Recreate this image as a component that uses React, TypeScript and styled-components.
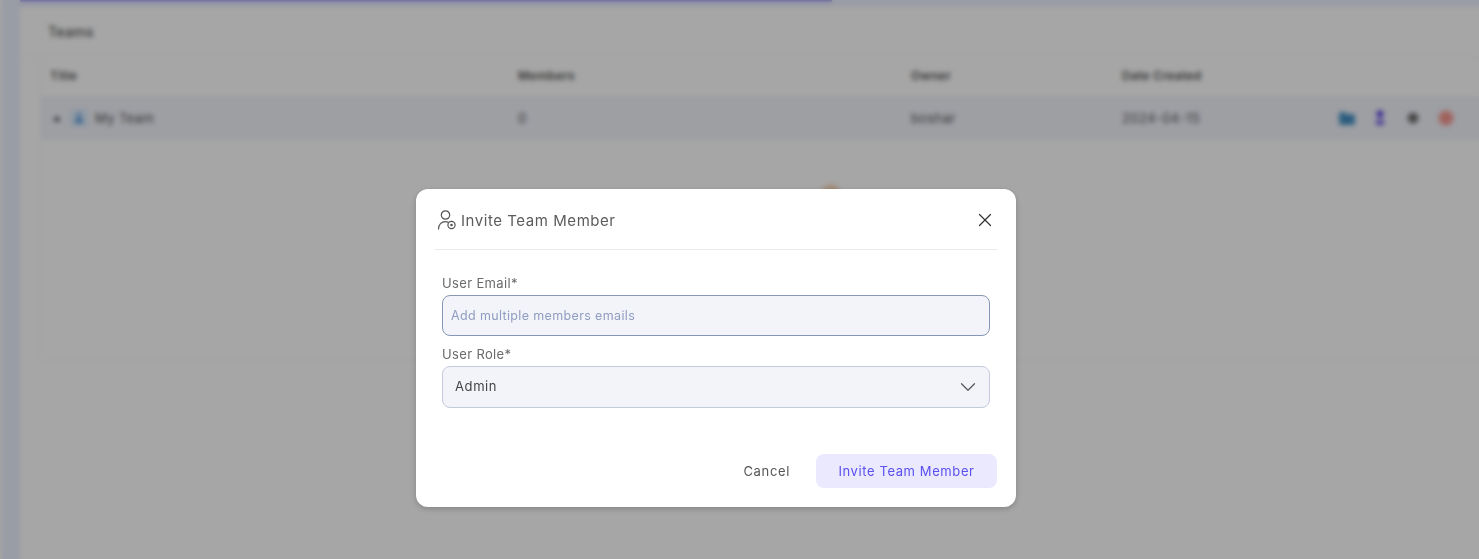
import React from "react";
import styled, { createGlobalStyle } from "styled-components";
import { X, ChevronDown } from "lucide-react";

const GlobalStyle = createGlobalStyle`
  html, body { margin: 0; padding: 0; height: 100%; overflow: hidden; }
  body { font-family: Inter, "Liberation Sans", sans-serif; background: #fff; }
  #root { height: 100%; }
  * { box-sizing: border-box; }
`;

const Page = styled.div`
  display: flex;
  height: 559px;
  background: #fff;
  overflow: hidden;
`;

const SideStrip = styled.div`
  width: 18px;
  flex-shrink: 0;
  margin-left: 2px;
  background: #ecf1ff;
`;

const Main = styled.div`
  flex: 1;
  min-width: 0;
  display: flex;
  flex-direction: column;
`;

const TopBar = styled.div`
  height: 7px;
  flex-shrink: 0;
  background: #ecf1ff;
`;

const Progress = styled.div`
  width: 812px;
  height: 2px;
  background: #a7a2f5;
`;

const Card = styled.div`
  flex: 1;
  padding: 0 0 0 20px;
`;

const CardTitle = styled.h2`
  margin: 0 0 0 -20px;
  padding: 0 0 0 28px;
  height: 52px;
  line-height: 50px;
  font-size: 14px;
  font-weight: 500;
  color: #555;
  letter-spacing: 0.3px;
  border-bottom: 1px solid #f2f2f2;
`;

const Table = styled.div`
  height: 302px;
  border: 1px solid #f3f3f3;
  border-top: none;
  border-right: none;
  position: relative;
`;

const columns = "468px 393px 211px 1fr 141px";

const HeadRow = styled.div`
  display: grid;
  grid-template-columns: ${columns};
  height: 37px;
  align-items: center;
  padding: 0 0 4px 9px;
  font-size: 12px;
  font-weight: 600;
  letter-spacing: 0.3px;
  color: #555;
`;

const Row = styled.div`
  display: grid;
  grid-template-columns: ${columns};
  height: 44px;
  align-items: center;
  padding-left: 9px;
  background: #f2f4fb;
  font-size: 13px;
  letter-spacing: 0.4px;
  color: #555;
`;

const TitleCell = styled.div`
  display: flex;
  align-items: center;
`;

const Caret = styled.span`
  width: 0;
  height: 0;
  margin: 0 9px 0 3px;
  border-left: 4px solid transparent;
  border-right: 4px solid transparent;
  border-bottom: 5px solid #444;
`;

const TeamBadge = styled.span`
  width: 18px;
  height: 18px;
  margin-right: 7px;
  border-radius: 4px;
  background: #dcebfb;
  display: flex;
  align-items: center;
  justify-content: center;
`;

const Actions = styled.div`
  display: flex;
  align-items: center;
  gap: 15px;
`;

const OrangeBlob = styled.div`
  position: absolute;
  left: 782px;
  top: 126px;
  width: 16px;
  height: 30px;
  border-radius: 6px;
  background: #f6d5b4;
`;

const Backdrop = styled.div`
  position: fixed;
  inset: 0;
  padding: 189px 0 0 416px;
  background: rgba(0, 0, 0, 0.35);
  backdrop-filter: blur(2.5px);
`;

const Modal = styled.div`
  width: 600px;
  height: 318px;
  padding: 0 19px;
  border-radius: 12px;
  background: #fff;
  box-shadow: 0 2px 6px rgba(0, 0, 0, 0.2);
  display: flex;
  flex-direction: column;
`;

const ModalHeader = styled.div`
  height: 61px;
  flex-shrink: 0;
  display: flex;
  align-items: center;
  padding: 2px 1px 0 2px;
  border-bottom: 1px solid #ebebeb;
`;

const ModalTitle = styled.div`
  flex: 1;
  margin-left: 4px;
  font-size: 15px;
  font-weight: 400;
  color: #5c5c5c;
  letter-spacing: 0.55px;
`;

const CloseButton = styled.button`
  border: none;
  background: none;
  padding: 0;
  display: flex;
  color: #333;
`;

const Form = styled.div`
  padding: 25px 7px 0;
  display: flex;
  flex-direction: column;
`;

const Label = styled.label`
  height: 20px;
  line-height: 16px;
  font-size: 13px;
  color: #6a6a6a;
  letter-spacing: 0.35px;
`;

const EmailInput = styled.input`
  width: 100%;
  height: 41px;
  margin-bottom: 10px;
  padding: 0 8px;
  border: 1px solid #8896b6;
  border-radius: 8px;
  outline: none;
  background: #f2f4f9;
  font: inherit;
  font-size: 12.5px;
  letter-spacing: 0.36px;
  &::placeholder {
    color: #8f9dc0;
    opacity: 1;
  }
`;

const RoleSelect = styled.div`
  height: 42px;
  padding: 0 8px 2px 12px;
  border: 1px solid #c3cadb;
  border-radius: 8px;
  background: #f2f4f9;
  display: flex;
  align-items: center;
  justify-content: space-between;
  font-size: 13px;
  letter-spacing: 0.6px;
  color: #444;
  svg {
    color: #555;
    margin-top: 2px;
  }
`;

const Footer = styled.div`
  margin-top: 46px;
  display: flex;
  justify-content: flex-end;
  align-items: center;
  gap: 26px;
`;

const CancelButton = styled.button`
  border: none;
  background: none;
  padding: 0;
  font: inherit;
  font-size: 13px;
  letter-spacing: 0.65px;
  color: #555;
`;

const InviteButton = styled.button`
  width: 181px;
  height: 34px;
  border: none;
  border-radius: 8px;
  background: #ebe9fe;
  font: inherit;
  font-size: 13px;
  letter-spacing: 0.6px;
  color: #5a4ff0;
`;

const InviteIcon = () => (
  <svg width="20" height="22" viewBox="0 0 20 22" fill="none" stroke="#555" strokeWidth="1.2">
    <circle cx="8.5" cy="6" r="4.2" />
    <path d="M1.5 20c0-4.4 3-7.4 7-7.4 1 0 1.8.2 2.6.5" strokeLinecap="round" />
    <circle cx="14.5" cy="16" r="3.6" />
    <circle cx="14.5" cy="16" r="1.3" fill="#555" stroke="none" />
  </svg>
);

const FolderIcon = () => (
  <svg width="18" height="18" viewBox="0 0 18 18" fill="#4a94c8">
    <path d="M1 5c0-1.2.8-2 2-2h3.5l2 2H15c1.2 0 2 .8 2 2v7c0 1.2-.8 2-2 2H3c-1.2 0-2-.8-2-2z" />
    <circle cx="9" cy="10.5" r="2" fill="#2f7aae" />
  </svg>
);

const PersonIcon = () => (
  <svg width="18" height="18" viewBox="0 0 18 18">
    <circle cx="9" cy="5" r="3.4" fill="#4f35e0" />
    <ellipse cx="9" cy="13.5" rx="4.5" ry="3" fill="#7c6ae8" />
  </svg>
);

const GearIcon = () => (
  <svg width="18" height="18" viewBox="0 0 18 18">
    <circle cx="9" cy="9" r="5.5" fill="#7a7a7a" />
    <circle cx="9" cy="9" r="2" fill="#555" />
  </svg>
);

const RemoveIcon = () => (
  <svg width="18" height="18" viewBox="0 0 18 18">
    <circle cx="9" cy="9" r="7.5" fill="#f79c94" />
    <rect x="5" y="8" width="8" height="2" rx="1" fill="#f08a82" />
  </svg>
);

export default function App() {
  return (
    <>
      <GlobalStyle />
      <Page>
        <SideStrip />
        <Main>
          <TopBar>
            <Progress />
          </TopBar>
          <Card>
            <CardTitle>Teams</CardTitle>
            <Table>
              <HeadRow>
                <span>Title</span>
                <span>Members</span>
                <span>Owner</span>
                <span>Date Created</span>
              </HeadRow>
              <Row>
                <TitleCell>
                  <Caret />
                  <TeamBadge>
                    <svg width="10" height="12" viewBox="0 0 10 12" fill="#4a90d9">
                      <circle cx="5" cy="3" r="2" />
                      <path d="M1 11c0-3 1.6-5 4-5s4 2 4 5z" />
                    </svg>
                  </TeamBadge>
                  My Team
                </TitleCell>
                <span>0</span>
                <span>boshar</span>
                <span>2024-04-15</span>
                <Actions>
                  <FolderIcon />
                  <PersonIcon />
                  <GearIcon />
                  <RemoveIcon />
                </Actions>
              </Row>
              <OrangeBlob />
            </Table>
          </Card>
        </Main>
      </Page>
      <Backdrop>
        <Modal>
          <ModalHeader>
            <InviteIcon />
            <ModalTitle>Invite Team Member</ModalTitle>
            <CloseButton>
              <X size={22} strokeWidth={1.3} />
            </CloseButton>
          </ModalHeader>
          <Form>
            <Label>User Email*</Label>
            <EmailInput placeholder="Add multiple members emails" />
            <Label>User Role*</Label>
            <RoleSelect>
              Admin
              <ChevronDown size={26} strokeWidth={1.1} />
            </RoleSelect>
          </Form>
          <Footer>
            <CancelButton>Cancel</CancelButton>
            <InviteButton>Invite Team Member</InviteButton>
          </Footer>
        </Modal>
      </Backdrop>
    </>
  );
}
